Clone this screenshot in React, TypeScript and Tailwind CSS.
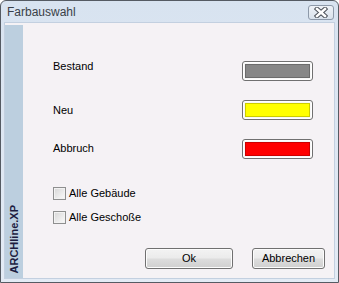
import React from "react";

const font = { fontFamily: '"Liberation Sans", Arial, sans-serif' };

function Swatch({ color }: { color: string }) {
  return (
    <div className="w-[71px] h-[20px] rounded-[3px] border border-[#707070] bg-[#f7f7f7] p-[2px] shadow-[inset_0_0_0_1px_#ffffff]">
      <div className={`w-full h-full border border-black/20 ${color}`} />
    </div>
  );
}

function CheckRow({ label }: { label: string }) {
  return (
    <div className="flex items-center gap-[3px] h-[13px]">
      <div className="w-[13px] h-[13px] border border-[#8e8f8f] bg-gradient-to-br from-[#d6d6d6] to-[#fbfbfb] shadow-[inset_0_0_0_1px_#f2f2f2]" />
      <span className="text-[11px] leading-[13px] text-black">{label}</span>
    </div>
  );
}

function DlgButton({ label, w }: { label: string; w: string }) {
  return (
    <button
      className={`${w} h-[21px] rounded-[3px] border border-[#707070] bg-[linear-gradient(#f3f3f3_0%,#ebebeb_48%,#dddddd_52%,#cfcfcf_100%)] shadow-[inset_0_0_0_1px_#fcfcfc] text-[11px] leading-[13px] text-black`}
    >
      {label}
    </button>
  );
}

export default function App() {
  return (
    <div className="w-[339px] h-[283px] bg-white" style={font}>
      <div className="w-full h-full flex flex-col border border-[#555b63] rounded-t-[6px] bg-[linear-gradient(#d8e3f0,#e3ebf5)] px-[3px] pb-[3px]">
        {/* title bar */}
        <div className="h-[21px] flex items-start justify-between">
          <span className="mt-[4px] ml-[3px] text-[12px] leading-[14px] text-[#3a3f47]">Farbauswahl</span>
          <div className="mt-[4px] mr-[1px] w-[26px] h-[15px] rounded-[3px] border border-[#8d99a9] bg-[linear-gradient(#eef2f7,#d9e2ec)] flex items-center justify-center">
            <svg width="14" height="11" viewBox="0 0 14 11">
              <path d="M3 2 L11 9 M11 2 L3 9" stroke="#4a4f57" strokeWidth="4.5" strokeLinecap="square" />
              <path d="M3 2 L11 9 M11 2 L3 9" stroke="#ffffff" strokeWidth="2.5" strokeLinecap="square" />
            </svg>
          </div>
        </div>

        {/* client area */}
        <div className="flex-1 flex border border-[#c3d0e0] bg-[#f5f2f5]">
          <div className="mt-[2px] w-[18px] bg-[#bccfdf] flex flex-col justify-end items-center pb-[5px]">
            <span className="[writing-mode:vertical-rl] rotate-180 text-[11px] leading-[11px] font-bold text-[#1c1c3f]">
              ARCHline.XP
            </span>
          </div>

          <div className="flex-1 flex flex-col">
            <div className="flex justify-between pl-[30px] pr-[21px]">
              <div className="flex flex-col text-[11px] leading-[13px] text-black">
                <span className="mt-[37px]">Bestand</span>
                <span className="mt-[31px]">Neu</span>
                <span className="mt-[25px]">Abbruch</span>
              </div>
              <div className="flex flex-col gap-[19px] mt-[38px]">
                <Swatch color="bg-[#878787]" />
                <Swatch color="bg-[#ffff00]" />
                <Swatch color="bg-[#ff0000]" />
              </div>
            </div>

            <div className="flex flex-col gap-[11px] mt-[28px] pl-[30px]">
              <CheckRow label="Alle Gebäude" />
              <CheckRow label="Alle Geschoße" />
            </div>

            <div className="flex justify-end gap-[19px] mt-[24px] pr-[9px]">
              <DlgButton label="Ok" w="w-[88px]" />
              <DlgButton label="Abbrechen" w="w-[73px]" />
            </div>
          </div>
        </div>
      </div>
    </div>
  );
}
